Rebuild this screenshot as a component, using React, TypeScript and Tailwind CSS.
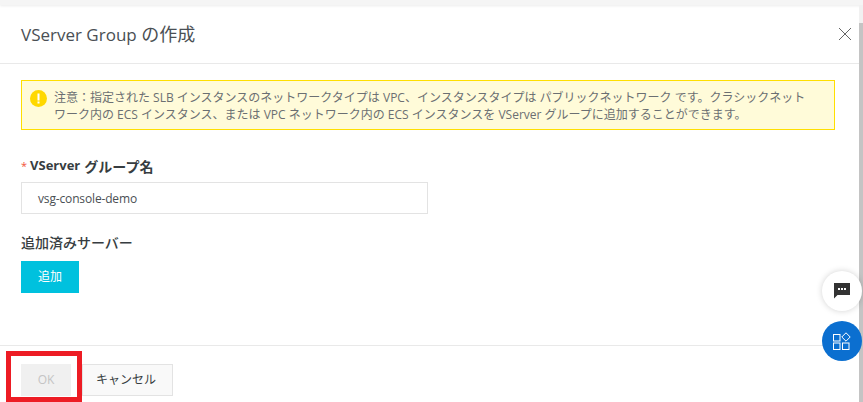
const jp = { fontFamily: '"Open Sans", "Noto Sans CJK JP", sans-serif' };

export default function App() {
  return (
    <div style={jp} className="relative h-[402px] w-[863px] overflow-hidden bg-white text-[#373d41]">
      <div className="relative h-[5px] bg-[#f5f5f5] shadow-[0_1px_3px_rgba(0,0,0,0.08)]" />
      <div className="mr-[4px] flex h-[59px] items-center justify-between border-b border-[#e9e9e9] pl-[21px] pr-[8px]">
        <h1 className="pt-[1px] text-[17px] leading-[24px] text-[#4a4f54]">VServer Group <span className="text-[18px]">の作成</span></h1>
        <svg width="12" height="12" viewBox="0 0 12 12" fill="none" stroke="#666" strokeWidth="1"><path d="M0 0l12 12M12 0L0 12" /></svg>
      </div>
      <div className="flex flex-col pl-[21px] pr-[28px] pt-[16px]">
        <div className="flex h-[50px] w-[814px] items-start border border-[#ffdf00] bg-[#fffbd9] pl-[8px] pt-[8px]">
          <svg className="mt-[1px] shrink-0" width="17" height="17" viewBox="0 0 17 17"><circle cx="8.5" cy="8.5" r="8.5" fill="#ffd800" /><rect x="7.5" y="3.5" width="2" height="7" fill="#fff" /><rect x="7.5" y="11.5" width="2" height="2" fill="#fff" /></svg>
          <p className="ml-[7px] w-[760px] text-[12px] leading-[17px] text-[#6b6f72]">注意：指定された SLB インスタンスのネットワークタイプは VPC、インスタンスタイプは パブリックネットワーク です。クラシックネットワーク内の ECS インスタンス、または VPC ネットワーク内の ECS インスタンスを VServer グループに追加することができます。</p>
        </div>
        <label className="mt-[26px] flex h-[20px] items-center text-[14px] font-bold"><span className="mr-[3px] text-[11px] font-normal text-[#f2533a]">*</span><span className="mr-[4px] text-[13px]">VServer</span>グループ名</label>
        <div className="mt-[6px] flex h-[32px] w-[407px] items-center border border-[#e3e3e3] pl-[16px] pt-[1px] text-[12px] tracking-[-0.15px] text-[#4a4f54]">vsg-console-demo</div>
        <div className="mt-[19px] h-[20px] text-[14px] font-medium leading-[20px]">追加済みサーバー</div>
        <button className="mt-[8px] h-[32px] w-[58px] bg-[#00c1de] text-[12px] text-white">追加</button>
      </div>
      <div className="absolute bottom-0 left-0 right-[4px] flex h-[57px] items-start gap-[11px] border-t border-[#e9e9e9] pl-[21px] pt-[18px]">
        <button className="h-[32px] w-[50px] bg-[#f0f0f0] text-[12px] text-[#c4c4c4]">OK</button>
        <button className="h-[32px] w-[91px] border border-[#e3e3e3] bg-[#f9f9f9] pr-[3px] text-[12px] text-[#373d41]">キャンセル</button>
      </div>
      <div className="absolute left-[6px] top-[351px] h-[51px] w-[76px] border-[5px] border-[#ed1c24]" />
      <div className="absolute right-0 top-[5px] h-[18px] w-[4px] bg-[#f1f1f1]" />
      <div className="absolute right-0 top-[23px] h-[379px] w-[4px] bg-[#c4c4c4]" />
      <div className="absolute left-[822px] top-[271px] flex h-[40px] w-[40px] items-center justify-center rounded-full bg-white shadow-[0_0_6px_rgba(0,0,0,0.18)]">
        <svg width="16" height="16" viewBox="0 0 16 16"><path d="M0 0h16v12H3.5L0 15.5z" fill="#333" /><rect x="4" y="5" width="2" height="2" fill="#fff" /><rect x="7" y="5" width="2" height="2" fill="#fff" /><rect x="10" y="5" width="2" height="2" fill="#fff" /></svg>
      </div>
      <div className="absolute left-[822px] top-[321px] flex h-[40px] w-[40px] items-center justify-center rounded-full bg-[#0b6fd0]">
        <svg width="18" height="18" viewBox="0 0 18 18" fill="none" stroke="#fff" strokeWidth="1"><rect x="0.5" y="2.5" width="6.5" height="6.5" /><rect x="0.5" y="11" width="6.5" height="6.5" /><rect x="9.5" y="11" width="6.5" height="6.5" /><path d="M13 0.8L17.2 5 13 9.2 8.8 5z" /></svg>
      </div>
    </div>
  );
}
